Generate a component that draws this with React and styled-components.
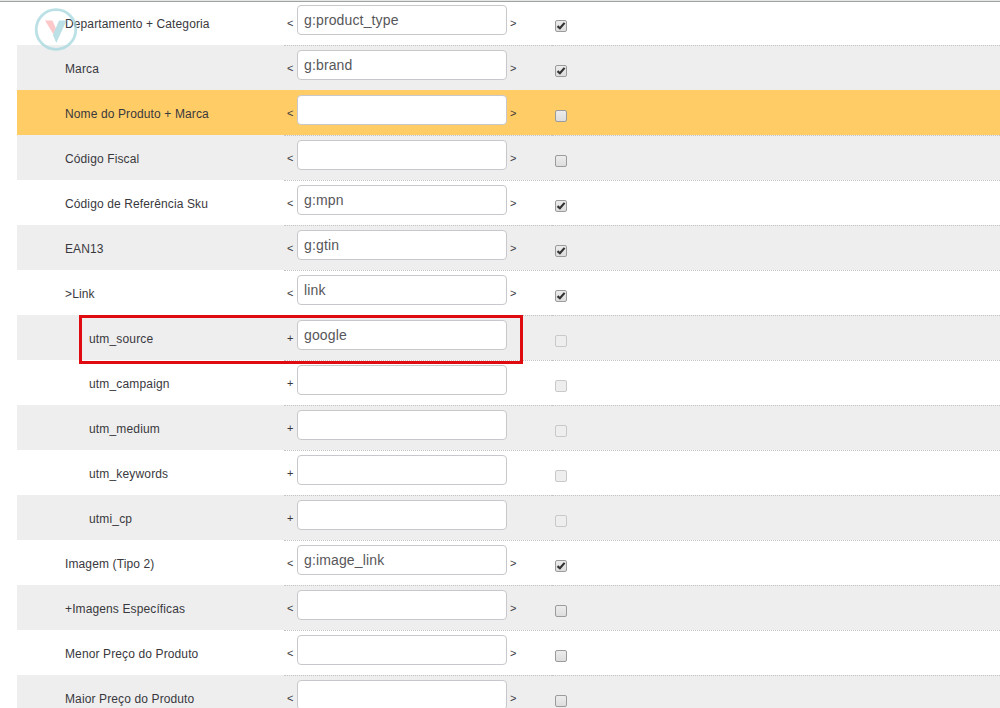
import React from "react";
import styled, { createGlobalStyle } from "styled-components";

const GlobalStyle = createGlobalStyle`
  * { box-sizing: border-box; }
  body { margin: 0; background: #fff; overflow: hidden; font-family: "Liberation Sans", Arial, sans-serif; color: #39383d; }
`;

const Page = styled.main`
  position: relative;
  height: 708px;
  overflow: hidden;
`;

const TopRule = styled.div`
  height: 2px;
  background: #e6e6e6;
  border-bottom: 1px solid #a0a3a3;
`;

const Table = styled.div`
  margin: -2px 0 0 17px;
`;

const rowColors = { plain: "transparent", shaded: "#eeeeee", active: "#ffcc66" };

const Row = styled.div`
  display: grid;
  grid-template-columns: 267px 268px 1fr;
  height: 45px;
  background: ${(p) => rowColors[p.$tone]};
`;

const Cell = styled.div`
  border-top: 1px dotted ${(p) => (p.$line ? "#c4c4c4" : "transparent")};
`;

const Label = styled.div`
  padding: 16px 0 0 ${(p) => (p.$nested ? 72 : 48)}px;
  font-size: 12px;
  line-height: 16px;
  letter-spacing: ${(p) => (p.$nested ? 0.16 : 0.12)}px;
  white-space: nowrap;
`;

const FieldCell = styled(Cell)`
  display: flex;
  align-items: flex-start;
  padding: 4px 0 0 3px;
`;

const Sign = styled.span`
  width: 10px;
  padding-top: 10px;
  font-size: 11px;
  line-height: 16px;
`;

const CloseSign = styled(Sign)`
  margin-left: 3px;
`;

const Input = styled.input`
  width: 210px;
  height: 30px;
  padding: 2px 6px;
  border: 1px solid #c8c8cc;
  border-radius: 4px;
  background: #fff;
  color: #57575a;
  font: 14px/20px "Liberation Sans", Arial, sans-serif;
  letter-spacing: 0.14px;
  outline: 0;
`;

const CheckCell = styled(Cell)`
  padding: 19px 0 0 3px;
`;

const Box = styled.span`
  display: block;
  width: 12px;
  height: 12px;
  border: 1px solid ${(p) => (p.$disabled ? "#c9c9c9" : "#9b9b9b")};
  border-radius: 2px;
  background: ${(p) => (p.$disabled ? "#eeeeee" : "linear-gradient(#ececec, #dddddd)")};
  svg { display: block; }
`;

const Highlight = styled.div`
  position: absolute;
  left: 79px;
  top: 315px;
  width: 444px;
  height: 49px;
  border: 3px solid #e00b10;
`;

const Logo = styled.svg`
  position: absolute;
  left: 34px;
  top: 8px;
`;

const rows = [
  { label: "Departamento + Categoria", value: "g:product_type", checked: true },
  { label: "Marca", value: "g:brand", checked: true },
  { label: "Nome do Produto + Marca", active: true },
  { label: "Código Fiscal" },
  { label: "Código de Referência Sku", value: "g:mpn", checked: true },
  { label: "EAN13", value: "g:gtin", checked: true },
  { label: ">Link", value: "link", checked: true },
  { label: "utm_source", value: "google", nested: true },
  { label: "utm_campaign", nested: true },
  { label: "utm_medium", nested: true },
  { label: "utm_keywords", nested: true },
  { label: "utmi_cp", nested: true },
  { label: "Imagem (Tipo 2)", value: "g:image_link", checked: true },
  { label: "+Imagens Específicas" },
  { label: "Menor Preço do Produto" },
  { label: "Maior Preço do Produto" },
];

function Checkbox({ checked, disabled }) {
  return (
    <Box $disabled={disabled} role="checkbox" aria-checked={!!checked} aria-disabled={!!disabled}>
      {checked && (
        <svg width="10" height="10" viewBox="0 0 10 10">
          <path d="M1.5 5.2 3.9 7.3 8.6 1.9" fill="none" stroke="#333" strokeWidth="2.2" />
        </svg>
      )}
    </Box>
  );
}

function MappingRow({ row, index }) {
  const tone = row.active ? "active" : index % 2 ? "shaded" : "plain";
  const line = index > 0 && !row.active;
  return (
    <Row $tone={tone}>
      <Label $nested={row.nested}>{row.label}</Label>
      <FieldCell $line={line}>
        <Sign>{row.nested ? "+" : "<"}</Sign>
        <Input defaultValue={row.value || ""} aria-label={row.label} spellCheck={false} />
        {!row.nested && <CloseSign>{">"}</CloseSign>}
      </FieldCell>
      <CheckCell $line={line}>
        <Checkbox checked={row.checked} disabled={row.nested} />
      </CheckCell>
    </Row>
  );
}

export default function App() {
  return (
    <Page>
      <GlobalStyle />
      <TopRule />
      <Table>
        {rows.map((row, i) => (
          <MappingRow key={row.label} row={row} index={i} />
        ))}
      </Table>
      <Highlight />
      <Logo width="44" height="44" viewBox="0 0 44 44" opacity="0.75">
        <circle cx="22" cy="21.5" r="19.8" fill="none" stroke="#a5d8df" strokeWidth="2.8" />
        <path d="M11 12.5h7.4l3.6 8-2.6 5.8Z" fill="#fbb6b8" />
        <path d="M25 12.5h7.6L22.3 35l-3.4-8Z" fill="#a5d8df" />
      </Logo>
    </Page>
  );
}
